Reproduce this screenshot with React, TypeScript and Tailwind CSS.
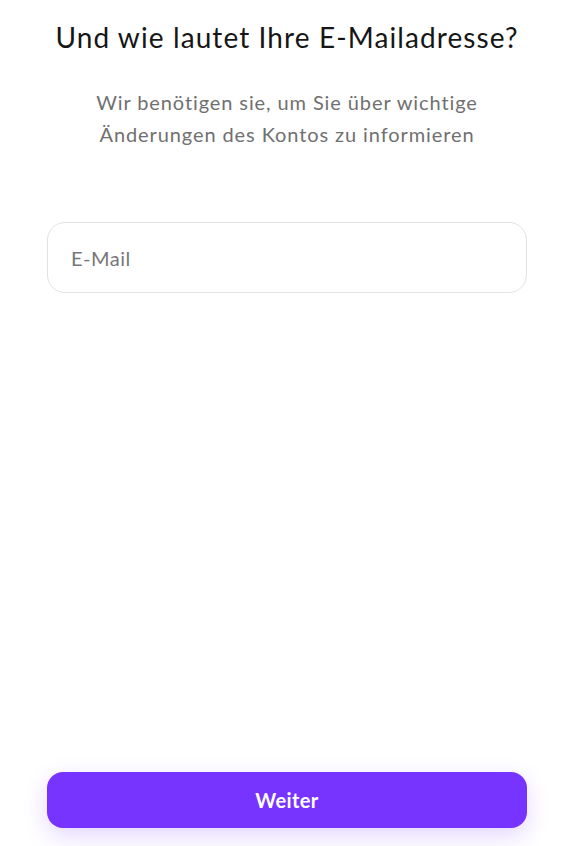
export default function App() {
    return (
        <div className="min-h-[846px] h-[846px] bg-white flex flex-col font-['Lato',_'Noto_Sans',_sans-serif] overflow-hidden">
            <div className="ml-[47px] w-[480px] flex flex-col flex-1">
                <h1 className="mt-[17px] text-center text-[28px] leading-[40px] text-[#161616] tracking-[1.1px] whitespace-nowrap">
                    Und wie lautet Ihre E-Mailadresse?
                </h1>
                <p className="mt-[29px] text-center text-[20px] leading-[32px] text-[#707070] tracking-[0.9px] whitespace-nowrap">
                    Wir benötigen sie, um Sie über wichtige
                    <br />
                    Änderungen des Kontos zu informieren
                </p>
                <div className="mt-[72px] h-[71px] rounded-[18px] border border-[#e2e2e2] flex items-center px-[23px]">
                    <input
                        type="email"
                        placeholder="E-Mail"
                        className="w-full outline-none text-[20px] text-[#161616] placeholder:text-[#777777] bg-transparent tracking-[0.5px]"
                    />
                </div>
                <div className="flex-1"></div>
                <button className="mb-[18px] h-[56px] rounded-[16px] bg-[#7733ff] text-white text-[20px] font-bold tracking-[0.4px] shadow-[0_8px_24px_rgba(119,51,255,0.2)]">
                    Weiter
                </button>
            </div>
        </div>
    );
}
